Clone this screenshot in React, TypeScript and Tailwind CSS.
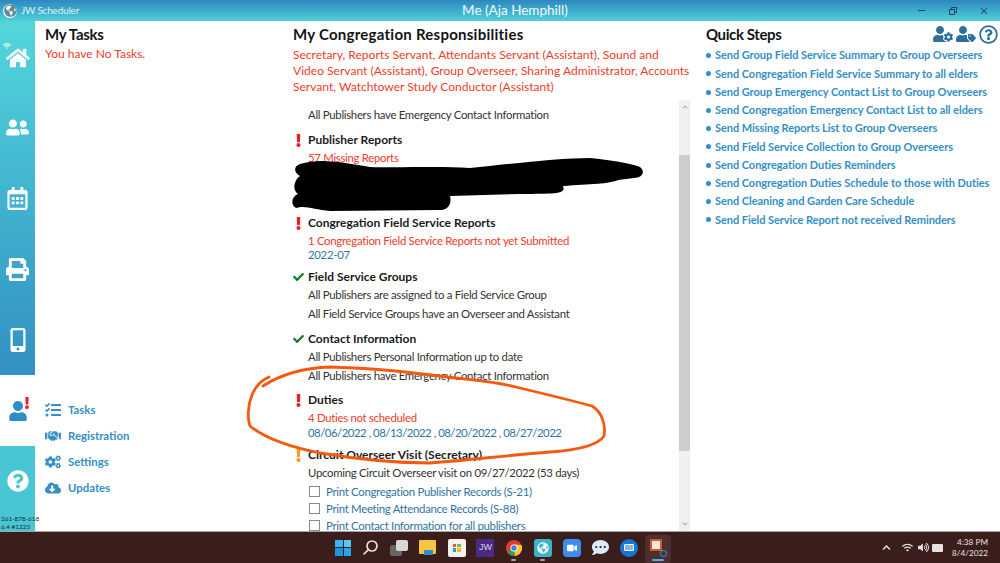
import React from 'react'
import {
  FaHome, FaUserFriends, FaRegCalendarAlt, FaPrint, FaMobileAlt, FaUser, FaQuestionCircle, FaRegQuestionCircle,
  FaTasks, FaHandshake, FaCogs, FaCloudDownloadAlt, FaUserCog, FaUserTag, FaCheck, FaExclamation, FaWifi,
  FaGlobeAmericas, FaVideo, FaCommentDots, FaVolumeUp, FaChevronUp, FaChevronDown,
} from 'react-icons/fa'

const QUICK_STEPS = [
  'Send Group Field Service Summary to Group Overseers',
  'Send Congregation Field Service Summary to all elders',
  'Send Group Emergency Contact List to Group Overseers',
  'Send Congregation Emergency Contact List to all elders',
  'Send Missing Reports List to Group Overseers',
  'Send Field Service Collection to Group Overseers',
  'Send Congregation Duties Reminders',
  'Send Congregation Duties Schedule to those with Duties',
  'Send Cleaning and Garden Care Schedule',
  'Send Field Service Report not received Reminders',
]

const LINKS = [
  { icon: FaTasks, label: 'Tasks' },
  { icon: FaHandshake, label: 'Registration' },
  { icon: FaCogs, label: 'Settings' },
  { icon: FaCloudDownloadAlt, label: 'Updates' },
]

const PRINTS = [
  'Print Congregation Publisher Records (S-21)',
  'Print Meeting Attendance Records (S-88)',
  'Print Contact Information for all publishers',
]

function Heading({ status, text, className }: { status: 'ok' | 'bad' | 'warn'; text: string; className: string }) {
  return (
    <div className={`flex h-[18px] items-center ${className}`}>
      <span className="mr-[4px] flex w-[11px] justify-center">
        {status === 'ok' && <FaCheck className="text-[12px] text-[#0f7a1f]" />}
        {status === 'bad' && <FaExclamation className="text-[13px] text-[#ee1c25]" />}
        {status === 'warn' && <FaExclamation className="text-[13px] text-[#f59a1b]" />}
      </span>
      <span className="text-[12px] font-bold text-[#1a1a1a]">{text}</span>
    </div>
  )
}

function Line({ children, color = 'text-[#333]', className = '' }: { children: React.ReactNode; color?: string; className?: string }) {
  return (
    <div className={`h-[18px] whitespace-nowrap pl-[15px] text-[11.4px] leading-[18px] tracking-[-0.3px] ${color} ${className}`}>
      {children}
    </div>
  )
}

const RED = 'text-[#ee3b2b]'
const BLUE = 'text-[#2f749f]'

function Tile({ className, children }: { className: string; children?: React.ReactNode }) {
  return <div className={`flex h-[18px] w-[18px] items-center justify-center ${className}`}>{children}</div>
}

function Taskbar() {
  return (
    <div className="flex h-[32px] items-center border-t border-[#a9a5a4] bg-[#3a1e1c]">
      <div className="ml-[335px] flex items-center gap-[10.7px]">
        <div className="grid h-[16px] w-[16px] grid-cols-2 gap-[1px]">
          <span className="bg-[#3fb4ee]" />
          <span className="bg-[#56c8f5]" />
          <span className="bg-[#1f95de]" />
          <span className="bg-[#2aa5e8]" />
        </div>
        <Tile className="">
          <svg width="17" height="17" viewBox="0 0 17 17" fill="none" stroke="#e4e0de" strokeWidth="1.7">
            <circle cx="10" cy="7" r="5" />
            <path d="M6.4 10.6 2 15" strokeLinecap="round" />
          </svg>
        </Tile>
        <Tile className="relative">
          <span className="absolute bottom-[1px] left-0 h-[11px] w-[12px] rounded-[2px] bg-[#6a6563]" />
          <span className="absolute right-0 top-[1px] h-[11px] w-[12px] rounded-[2px] bg-[#d9d6d5]" />
        </Tile>
        <Tile className="relative">
          <span className="absolute left-0 top-[1px] h-[14px] w-[17px] rounded-[1px] bg-[#f6c544]" />
          <span className="absolute bottom-[2px] left-[5px] h-[5px] w-[9px] bg-[#2b8fd6]" />
        </Tile>
        <Tile className="rounded-[2px] bg-[#f4f2f0]">
          <div className="grid h-[8px] w-[8px] grid-cols-2 gap-[1px]">
            <span className="bg-[#ee5a2a]" />
            <span className="bg-[#7db93a]" />
            <span className="bg-[#2e9be6]" />
            <span className="bg-[#f6b92b]" />
          </div>
        </Tile>
        <Tile className="bg-[#4a2a84] font-['Liberation_Sans',sans-serif] text-[9px] text-[#d9d3e8]">JW</Tile>
        <Tile className="relative">
          <svg width="16" height="16" viewBox="0 0 16 16">
            <circle cx="8" cy="8" r="8" fill="#e33b2e" />
            <path d="M8 8 1.1 12A8 8 0 0 0 9 15.9Z" fill="#2fa04a" />
            <path d="M8 8 9 15.9A8 8 0 0 0 15.5 5L8 4.5Z" fill="#fbc52d" />
            <circle cx="8" cy="8" r="3.6" fill="#fff" />
            <circle cx="8" cy="8" r="2.7" fill="#3b82e6" />
          </svg>
          <span className="absolute -bottom-[4px] left-[6px] h-[2px] w-[5px] rounded-full bg-[#a9a5a4]" />
        </Tile>
        <Tile className="relative rounded-[3px] bg-[#3fb2c8]">
          <FaGlobeAmericas className="text-[12px] text-[#e8f4f6]" />
          <span className="absolute -bottom-[4px] left-[6px] h-[2px] w-[5px] rounded-full bg-[#a9a5a4]" />
        </Tile>
        <Tile className="rounded-[4px] bg-[#3d8cf0]">
          <FaVideo className="text-[10px] text-white" />
        </Tile>
        <Tile className="rounded-full">
          <FaCommentDots className="text-[17px] text-[#dce9fb]" />
        </Tile>
        <Tile className="rounded-full bg-[#1477d4]">
          <span className="h-[7px] w-[10px] rounded-[1px] border border-white bg-[#7db8ea]" />
        </Tile>
        <Tile className="relative">
          <span className="absolute -inset-x-[4px] -bottom-[6px] -top-[4px] rounded-[3px] bg-[#4a302e]" />
          <span className="absolute left-[1px] top-0 h-[12px] w-[12px] border-2 border-[#d8532f] bg-[#efe9e4]" />
          <span className="absolute bottom-0 right-0 h-[7px] w-[7px] rounded-full border border-[#3f9bdc]" />
          <span className="absolute -bottom-[4px] left-[3px] h-[2px] w-[12px] rounded-full bg-[#45b4e8]" />
        </Tile>
      </div>
      <div className="ml-auto flex items-center text-[#e6e2e0]">
        <FaChevronUp className="mr-[11px] text-[9px]" />
        <FaWifi className="mr-[5px] text-[11px]" />
        <FaVolumeUp className="mr-[3px] text-[11px]" />
        <span className="mr-[3px] h-[8px] w-[11px] rounded-[1px] bg-[#e6e2e0]" />
        <div className="mr-[12px] w-[42px] text-right text-[8.2px] leading-[11px]">
          <div>4:38 PM</div>
          <div>8/4/2022</div>
        </div>
      </div>
    </div>
  )
}

export default function App() {
  return (
    <div className="relative flex h-[563px] w-[1000px] flex-col overflow-hidden bg-white font-['Lato','Liberation_Sans',sans-serif]">
      {/* title bar */}
      <div className="flex h-[21px] items-center bg-gradient-to-b from-[#2f88bf] to-[#4fd0d8] pl-[3px]">
        <span className="flex h-[14px] w-[14px] items-center justify-center rounded-full bg-white">
          <FaGlobeAmericas className="text-[13px] text-[#5d8a96]" />
        </span>
        <span className="ml-[4px] text-[10px] tracking-[-0.2px] text-[#dff3f6]">JW Scheduler</span>
        <span className="ml-[383px] text-[13.5px] text-[#f3fbfc]">Me (Aja Hemphill)</span>
        <div className="ml-auto flex items-center">
          <span className="h-[1px] w-[7px] bg-[#24415a]" />
          <svg className="ml-[24px]" width="8" height="8" viewBox="0 0 8 8" fill="none" stroke="#24415a">
            <path d="M.5 2.5h5v5h-5zM2.5 2.5v-2h5v5h-2" />
          </svg>
          <svg className="ml-[23px] mr-[12px]" width="8" height="8" viewBox="0 0 8 8" fill="none" stroke="#24415a">
            <path d="m1 1 6 6M7 1 1 7" />
          </svg>
        </div>
      </div>

      <div className="flex h-[510px]">
        {/* sidebar */}
        <div className="flex w-[35px] flex-col">
          <div className="flex h-[354px] flex-col bg-gradient-to-b from-[#53d6da] to-[#3290c3] text-white">
            <div className="relative flex h-[71px] items-center justify-center">
              <FaWifi className="absolute left-[3px] top-[21px] text-[8px]" />
              <FaHome className="mt-[2px] text-[24px]" />
            </div>
            <div className="flex h-[71px] items-center justify-center">
              <FaUserFriends className="text-[23px]" />
            </div>
            <div className="flex h-[71px] items-center justify-center">
              <FaRegCalendarAlt className="text-[23px]" />
            </div>
            <div className="flex h-[71px] items-center justify-center">
              <FaPrint className="text-[23px]" />
            </div>
            <div className="flex h-[70px] items-center justify-center">
              <FaMobileAlt className="text-[24px]" />
            </div>
          </div>
          <div className="relative flex h-[71px] items-center justify-center">
            <FaUser className="text-[20px] text-[#2f8cc4]" />
            <FaExclamation className="absolute right-[2px] top-[22px] text-[12px] text-[#ee1c25]" />
          </div>
          <div className="flex flex-1 flex-col items-center bg-[#48c6d4]">
            <FaQuestionCircle className="mt-[24px] text-[22px] text-white" />
            <div className="mt-auto w-full whitespace-nowrap pl-[1px] text-[6.4px] leading-[8px] text-[#1a2a30]">
              <div>261-878-618</div>
              <div>6.4 #1225</div>
            </div>
          </div>
        </div>

        {/* my tasks */}
        <div className="flex w-[258px] flex-col justify-between pb-[32px] pl-[10px] pt-[3px]">
          <div>
            <h2 className="text-[15px] font-bold leading-[20px] tracking-[-0.3px] text-[#141414]">My Tasks</h2>
            <p className="text-[12px] leading-[20px] text-[#ee3b2b]">You have No Tasks.</p>
          </div>
          <div className="flex flex-col gap-[4px]">
            {LINKS.map(({ icon: Icon, label }) => (
              <div key={label} className="flex h-[22px] items-center text-[#338fc5]">
                <Icon className="w-[16px] text-[16px]" />
                <span className="ml-[7px] text-[11.4px] font-bold">{label}</span>
              </div>
            ))}
          </div>
        </div>

        {/* responsibilities */}
        <div className="flex w-[397px] flex-col">
          <div className="h-[79px] pt-[3px]">
            <h2 className="text-[15px] font-bold leading-[20px] tracking-[0.25px] text-[#141414]">My Congregation Responsibilities</h2>
            <p className="mt-[3px] whitespace-nowrap text-[12.05px] leading-[16px] text-[#ee3b2b]">
              Secretary, Reports Servant, Attendants Servant (Assistant), Sound and
              <br />
              Video Servant (Assistant), Group Overseer, Sharing Administrator, Accounts
              <br />
              Servant, Watchtower Study Conductor (Assistant)
            </p>
          </div>
          <div className="flex min-h-0 flex-1">
            <div className="min-w-0 flex-1 overflow-hidden pt-[6px]">
              <Line>All Publishers have Emergency Contact Information</Line>

              <Heading status="bad" text="Publisher Reports" className="mt-[7px]" />
              <Line color={RED}>57 Missing Reports</Line>

              <Heading status="bad" text="Congregation Field Service Reports" className="mt-[47px]" />
              <Line color={RED}>1 Congregation Field Service Reports not yet Submitted</Line>
              <Line color={BLUE} className="-mt-[4px]">2022-07</Line>

              <Heading status="ok" text="Field Service Groups" className="mt-[4px]" />
              <Line>All Publishers are assigned to a Field Service Group</Line>
              <Line className="mt-[1px]">All Field Service Groups have an Overseer and Assistant</Line>

              <Heading status="ok" text="Contact Information" className="mt-[7px]" />
              <Line>All Publishers Personal Information up to date</Line>
              <Line className="mt-[1px]">All Publishers have Emergency Contact Information</Line>

              <Heading status="bad" text="Duties" className="mt-[6px]" />
              <Line color={RED}>4 Duties not scheduled</Line>
              <Line color={BLUE} className="-mt-[3px] tracking-[-0.5px]">08/06/2022 , 08/13/2022 , 08/20/2022 , 08/27/2022</Line>

              <Heading status="warn" text="Circuit Overseer Visit (Secretary)" className="mt-[4px]" />
              <Line>Upcoming Circuit Overseer visit on 09/27/2022 (53 days)</Line>

              <div className="mt-[1px] flex flex-col">
                {PRINTS.map((label) => (
                  <div key={label} className="flex h-[17px] items-center pl-[16px]">
                    <span className="h-[11px] w-[11px] shrink-0 border border-[#8a8a8a] bg-white" />
                    <span className={`ml-[6px] whitespace-nowrap text-[11.4px] tracking-[-0.3px] ${BLUE}`}>{label}</span>
                  </div>
                ))}
              </div>
            </div>
            {/* scrollbar */}
            <div className="flex w-[11px] flex-col bg-[#f0f0f0] text-[#a8a8a8]">
              <div className="flex h-[14px] items-center justify-center">
                <FaChevronUp className="text-[6px]" />
              </div>
              <div className="mt-[41px] h-[296px] bg-[#cdcdcd]" />
              <div className="mt-auto flex h-[14px] items-center justify-center">
                <FaChevronDown className="text-[6px]" />
              </div>
            </div>
          </div>
        </div>

        {/* quick steps */}
        <div className="min-w-0 flex-1 pl-[16px] pt-[3px]">
          <div className="flex h-[20px] items-center justify-between pr-[2px]">
            <h2 className="text-[15px] font-bold tracking-[-0.4px] text-[#141414]">Quick Steps</h2>
            <div className="flex items-center gap-[3px] text-[#2b6f9c]">
              <FaUserCog className="text-[20px]" />
              <FaUserTag className="text-[20px]" />
              <FaRegQuestionCircle className="text-[19px]" />
            </div>
          </div>
          <ul className="mt-[2.5px]">
            {QUICK_STEPS.map((step) => (
              <li key={step} className="flex h-[18.25px] items-center">
                <span className="h-[5px] w-[5px] shrink-0 rounded-full bg-[#338fc5]" />
                <span className="ml-[4px] whitespace-nowrap text-[11px] font-bold tracking-[-0.05px] text-[#338fc5]">{step}</span>
              </li>
            ))}
          </ul>
        </div>
      </div>

      <Taskbar />

      {/* redaction scribble and orange ring drawn over the page */}
      <svg className="pointer-events-none absolute left-0 top-0" width="1000" height="563" fill="none">
        <path
          fill="#000"
          d="M300 164C320 158 340 162 370 167C400 168 440 166 470 168C510 164 560 158 590 158C610 160 630 163 640 167C646 172 642 178 634 178L618 180C610 184 590 184 563 186C566 194 558 194 520 194L450 196C452 204 448 210 440 210L330 211C315 210 305 205 296 208C290 205 292 196 298 194C292 190 294 180 300 176C293 172 294 166 300 164Z"
        />
        <path
          d="M269 377C262 380 256 385 252 395C248 405 247 418 250 426C262 436 285 446 320 453C350 458 390 463 430 463C470 460 510 455 550 452C580 450 598 445 604 436C606 425 602 412 592 406C570 400 545 394 520 388C490 380 465 380 440 376C400 371 370 368 330 367C300 368 280 375 263 386"
          stroke="#f4590e"
          strokeWidth="2.8"
          strokeLinecap="round"
        />
      </svg>
    </div>
  )
}
